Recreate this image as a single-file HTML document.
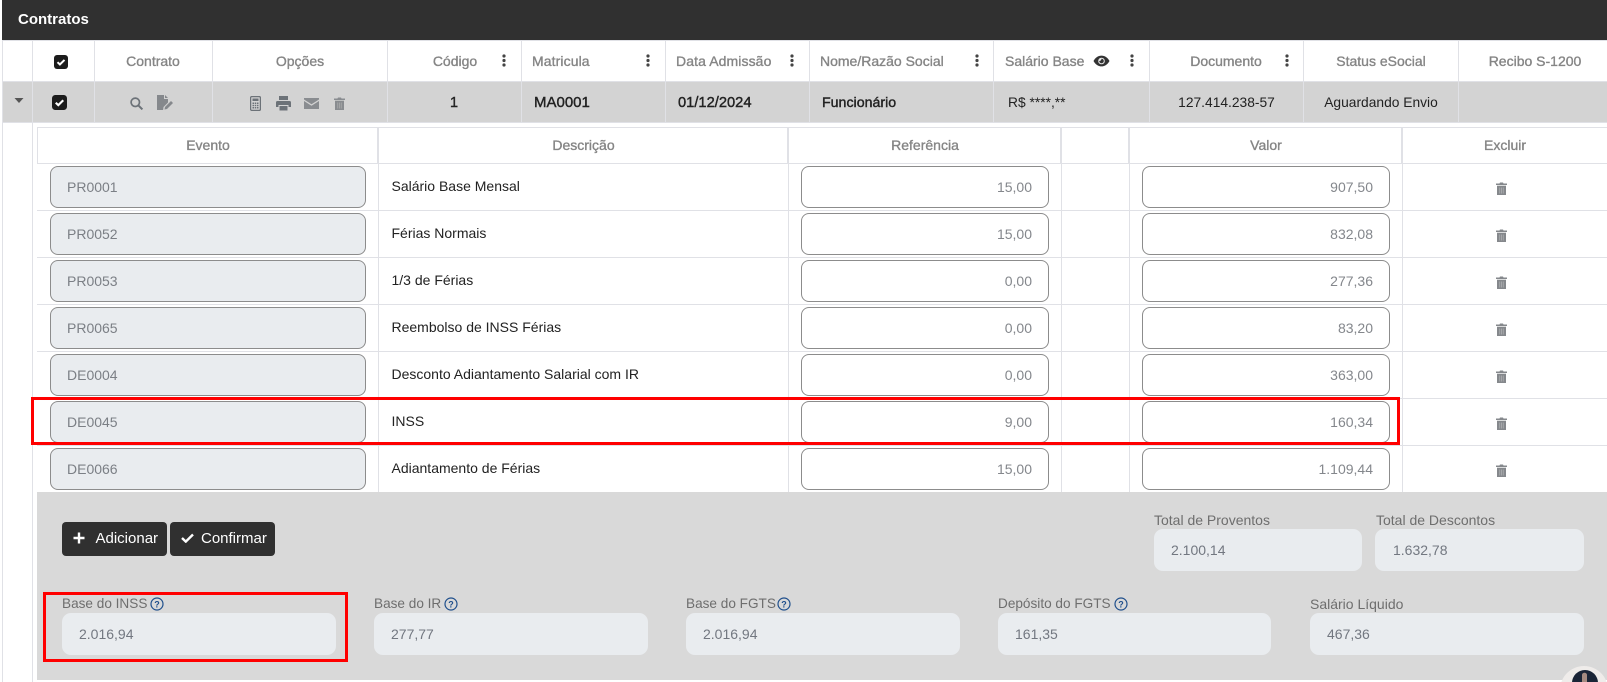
<!DOCTYPE html>
<html lang="pt-BR"><head><meta charset="utf-8"><title>Contratos</title>
<style>
*{box-sizing:border-box}
html,body{margin:0;padding:0;width:1607px;height:682px;overflow:hidden;background:#fff;font-family:"Liberation Sans",Arial,sans-serif}
.a{position:absolute}
.t{position:absolute;white-space:nowrap;line-height:20px;height:20px}
.c{transform:translateX(-50%)}
.h{font-size:14px;color:#858585;-webkit-text-stroke:.35px #858585;top:51px}
.h2{font-size:14px;color:#858585;-webkit-text-stroke:.35px #858585;top:135px}
.d{font-size:13.800px;color:#222;top:93px}
.m{-webkit-text-stroke:.4px #222}
.vl{position:absolute;width:1px;background:#e0e1e6}
.r{position:absolute;left:37px;width:1570px;height:47px;border-top:1px solid #e0e1e6;background:#fff}
.r .vl{top:0;height:47px}
.ev{position:absolute;left:13px;top:2px;width:316px;height:42px;border:1px solid #8c8c8c;border-radius:8px;background:#e9ecef;color:#7b7f85;font-size:14px;line-height:40px;padding-left:16px}
.in{position:absolute;top:2px;width:248px;height:42px;border:1px solid #8c8c8c;border-radius:8px;background:#fff;color:#84878c;font-size:14px;line-height:40px;text-align:right;padding-right:16px}
.ds{position:absolute;left:354.500px;top:12px;font-size:14px;line-height:20px;color:#222;white-space:nowrap}
.tr{position:absolute;left:1459px;top:18px}
.lb{position:absolute;font-size:14px;line-height:20px;color:#6e6e6e;white-space:nowrap}
.lb2{font-size:13.600px}
.f{position:absolute;height:42px;border-radius:9px;background:#e9ecef;color:#727780;font-size:14px;line-height:42px;padding-left:17px}
.f2{line-height:43px}
.btn{position:absolute;top:522px;height:34px;background:#303030;border-radius:4px}
.bt{position:absolute;top:529px;font-size:15px;line-height:20px;color:#fff;white-space:nowrap}
.rb{position:absolute;border:3px solid #f00;z-index:5;pointer-events:none}
svg{position:absolute;display:block}
</style></head><body>

<div class="a" style="left:2px;top:0;width:1605px;height:40px;background:#303030"></div>
<div class="t" style="left:18px;top:10px;font-size:15px;font-weight:bold;color:#fff">Contratos</div>

<div class="a" style="left:2px;top:82px;width:1605px;height:40px;background:#d3d3d3"></div>
<div class="a" style="left:2px;top:40px;width:1605px;height:1px;background:#e0e1e6"></div>
<div class="a" style="left:2px;top:81px;width:1605px;height:1px;background:#e0e1e6"></div>
<div class="a" style="left:2px;top:122px;width:1605px;height:1px;background:#e0e1e6"></div>

<div class="vl" style="left:2px;top:40px;height:642px"></div>
<div class="vl" style="left:32px;top:40px;height:642px"></div>
<div class="vl" style="left:94px;top:40px;height:83px"></div>
<div class="vl" style="left:212px;top:40px;height:83px"></div>
<div class="vl" style="left:387px;top:40px;height:83px"></div>
<div class="vl" style="left:521px;top:40px;height:83px"></div>
<div class="vl" style="left:665px;top:40px;height:83px"></div>
<div class="vl" style="left:809px;top:40px;height:83px"></div>
<div class="vl" style="left:993px;top:40px;height:83px"></div>
<div class="vl" style="left:1149px;top:40px;height:83px"></div>
<div class="vl" style="left:1303px;top:40px;height:83px"></div>
<div class="vl" style="left:1458px;top:40px;height:83px"></div>

<!-- header checkbox -->
<svg style="left:54px;top:55px" width="14" height="14" viewBox="0 0 14 14"><rect width="14" height="14" rx="3" fill="#1c1c1c"/><path d="M3.500 7.200l2.400 2.300 4.600-4.600" fill="none" stroke="#fff" stroke-width="2"/></svg>

<div class="t h c" style="left:153px">Contrato</div>
<div class="t h c" style="left:300px">Opções</div>
<div class="t h c" style="left:455px">Código</div>
<div class="t h" style="left:532px;letter-spacing:.1px">Matricula</div>
<div class="t h" style="left:676px;letter-spacing:.1px">Data Admissão</div>
<div class="t h" style="left:820px">Nome/Razão Social</div>
<div class="t h" style="left:1005px">Salário Base</div>
<div class="t h c" style="left:1226px">Documento</div>
<div class="t h c" style="left:1381px">Status eSocial</div>
<div class="t h c" style="left:1535px">Recibo S-1200</div>

<!-- kebabs -->
<svg style="left:502px;top:54px" width="4" height="13" viewBox="0 0 4 13" fill="#444"><circle cx="2" cy="2" r="1.600"/><circle cx="2" cy="6.500" r="1.600"/><circle cx="2" cy="11" r="1.600"/></svg>
<svg style="left:646px;top:54px" width="4" height="13" viewBox="0 0 4 13" fill="#444"><circle cx="2" cy="2" r="1.600"/><circle cx="2" cy="6.500" r="1.600"/><circle cx="2" cy="11" r="1.600"/></svg>
<svg style="left:790px;top:54px" width="4" height="13" viewBox="0 0 4 13" fill="#444"><circle cx="2" cy="2" r="1.600"/><circle cx="2" cy="6.500" r="1.600"/><circle cx="2" cy="11" r="1.600"/></svg>
<svg style="left:975px;top:54px" width="4" height="13" viewBox="0 0 4 13" fill="#444"><circle cx="2" cy="2" r="1.600"/><circle cx="2" cy="6.500" r="1.600"/><circle cx="2" cy="11" r="1.600"/></svg>
<svg style="left:1130px;top:54px" width="4" height="13" viewBox="0 0 4 13" fill="#444"><circle cx="2" cy="2" r="1.600"/><circle cx="2" cy="6.500" r="1.600"/><circle cx="2" cy="11" r="1.600"/></svg>
<svg style="left:1285px;top:54px" width="4" height="13" viewBox="0 0 4 13" fill="#444"><circle cx="2" cy="2" r="1.600"/><circle cx="2" cy="6.500" r="1.600"/><circle cx="2" cy="11" r="1.600"/></svg>

<!-- eye -->
<svg style="left:1093px;top:55px" width="17" height="12" viewBox="0 0 17 12"><path d="M.5 6C2.500 2.400 5.200.6 8.500.6s6 1.800 8 5.400c-2 3.600-4.700 5.400-8 5.400S2.500 9.600.5 6z" fill="#333"/><circle cx="8.500" cy="6" r="3.300" fill="#e8e8e8"/><path d="M8.500 3.700a2.300 2.300 0 1 1-2.300 2.300c1.300 0 2.300-1 2.300-2.300z" fill="#333"/></svg>

<!-- row -->
<svg style="left:14px;top:98px" width="10" height="6" viewBox="0 0 10 6"><path d="M.5 0h9L5 5z" fill="#555"/></svg>
<svg style="left:52px;top:95px" width="15" height="15" viewBox="0 0 14 14"><rect width="14" height="14" rx="3" fill="#1c1c1c"/><path d="M3.500 7.200l2.400 2.300 4.600-4.600" fill="none" stroke="#fff" stroke-width="2"/></svg>

<svg style="left:130px;top:97px" width="13" height="13" viewBox="0 0 13 13"><circle cx="5.300" cy="5.300" r="4.200" fill="none" stroke="#6c7278" stroke-width="1.700"/><path d="M8.400 8.400l4 4" stroke="#6c7278" stroke-width="2"/></svg>
<svg style="left:157px;top:95px" width="17" height="15" viewBox="0 0 17 15" fill="#85888c"><path d="M0 0h7v4h4v3.500L6.500 12l-.4 3H0zM8 0l3 3H8z"/><path d="M7.500 14.500l.5-2.500 6-6 2 2-6 6z"/></svg>

<svg style="left:250px;top:96px" width="11" height="15" viewBox="0 0 11 15"><rect x=".6" y=".6" width="9.800" height="13.800" rx="1.200" fill="none" stroke="#6c7278" stroke-width="1.300"/><rect x="2.500" y="2.500" width="6" height="2.500" fill="#6c7278"/><path d="M2.500 6.500h6v6h-6z" fill="#6c7278"/><path d="M4.500 6.500v6M6.500 6.500v6M2.500 8.500h6M2.500 10.500h6" stroke="#d3d3d3" stroke-width=".7"/></svg>
<svg style="left:276px;top:96px" width="15" height="15" viewBox="0 0 15 15" fill="#6c7278"><path d="M3 0h9v4H3z"/><path d="M1.500 5h12A1.500 1.500 0 0 1 15 6.500V11h-2.500V9h-10v2H0V6.500A1.500 1.500 0 0 1 1.500 5z"/><path d="M3.500 10h8v4.500h-8z"/></svg>
<svg style="left:303.500px;top:98px" width="15" height="11" viewBox="0 0 15 11" fill="#898c90"><path d="M0 0h15v1.500L7.500 6.300 0 1.500z"/><path d="M0 3l7.500 4.800L15 3v8H0z"/></svg>
<svg style="left:334px;top:97px" width="11" height="13" viewBox="0 0 11 13" fill="#898c90"><path d="M0 1.500h3.500L4 .5h3l.5 1H11V3H0z"/><path d="M1 3.700h9V13H1z"/><path d="M3.800 5.500v6M5.500 5.500v6M7.200 5.500v6" stroke="#b0b0b0" stroke-width=".7"/></svg>

<div class="t d m c" style="left:454px;font-size:14.500px">1</div>
<div class="t d m" style="left:534px;font-size:15px">MA0001</div>
<div class="t d m" style="left:678px;font-size:14.700px">01/12/2024</div>
<div class="t d m" style="left:822px;font-size:14.200px">Funcionário</div>
<div class="t d" style="left:1008px">R$ ****,**</div>
<div class="t d c" style="left:1226.500px">127.414.238-57</div>
<div class="t d c" style="left:1381px">Aguardando Envio</div>

<!-- inner table -->
<div class="vl" style="left:37px;top:127px;height:366px"></div>
<div class="a" style="left:37px;top:127px;width:1570px;height:1px;background:#e0e1e6"></div>
<div class="vl" style="left:377px;top:127px;height:37px;width:2px"></div>
<div class="vl" style="left:787px;top:127px;height:37px;width:2px"></div>
<div class="vl" style="left:1060px;top:127px;height:37px;width:2px"></div>
<div class="vl" style="left:1128px;top:127px;height:37px;width:2px"></div>
<div class="vl" style="left:1401px;top:127px;height:37px;width:2px"></div>
<div class="t h2 c" style="left:208px">Evento</div>
<div class="t h2 c" style="left:583.500px">Descrição</div>
<div class="t h2 c" style="left:925px">Referência</div>
<div class="t h2 c" style="left:1266px">Valor</div>
<div class="t h2 c" style="left:1505px">Excluir</div>

<div class="r" style="top:163px"><div class="vl" style="left:341px"></div><div class="vl" style="left:751px"></div><div class="vl" style="left:1024px"></div><div class="vl" style="left:1092px"></div><div class="vl" style="left:1365px"></div>
<div class="ev">PR0001</div><div class="ds">Salário Base Mensal</div><div class="in" style="left:764px">15,00</div><div class="in" style="left:1105px">907,50</div>
<svg class="tr" width="11" height="13" viewBox="0 0 11 13" fill="#85888c"><path d="M0 1.500h3.500L4 .5h3l.5 1H11V3H0z"/><path d="M1 3.700h9V13H1z"/><path d="M3.800 5.500v6M5.500 5.500v6M7.200 5.500v6" stroke="#b4b6b8" stroke-width=".7"/></svg></div>

<div class="r" style="top:210px"><div class="vl" style="left:341px"></div><div class="vl" style="left:751px"></div><div class="vl" style="left:1024px"></div><div class="vl" style="left:1092px"></div><div class="vl" style="left:1365px"></div>
<div class="ev">PR0052</div><div class="ds">Férias Normais</div><div class="in" style="left:764px">15,00</div><div class="in" style="left:1105px">832,08</div>
<svg class="tr" width="11" height="13" viewBox="0 0 11 13" fill="#85888c"><path d="M0 1.500h3.500L4 .5h3l.5 1H11V3H0z"/><path d="M1 3.700h9V13H1z"/><path d="M3.800 5.500v6M5.500 5.500v6M7.200 5.500v6" stroke="#b4b6b8" stroke-width=".7"/></svg></div>

<div class="r" style="top:257px"><div class="vl" style="left:341px"></div><div class="vl" style="left:751px"></div><div class="vl" style="left:1024px"></div><div class="vl" style="left:1092px"></div><div class="vl" style="left:1365px"></div>
<div class="ev">PR0053</div><div class="ds">1/3 de Férias</div><div class="in" style="left:764px">0,00</div><div class="in" style="left:1105px">277,36</div>
<svg class="tr" width="11" height="13" viewBox="0 0 11 13" fill="#85888c"><path d="M0 1.500h3.500L4 .5h3l.5 1H11V3H0z"/><path d="M1 3.700h9V13H1z"/><path d="M3.800 5.500v6M5.500 5.500v6M7.200 5.500v6" stroke="#b4b6b8" stroke-width=".7"/></svg></div>

<div class="r" style="top:304px"><div class="vl" style="left:341px"></div><div class="vl" style="left:751px"></div><div class="vl" style="left:1024px"></div><div class="vl" style="left:1092px"></div><div class="vl" style="left:1365px"></div>
<div class="ev">PR0065</div><div class="ds">Reembolso de INSS Férias</div><div class="in" style="left:764px">0,00</div><div class="in" style="left:1105px">83,20</div>
<svg class="tr" width="11" height="13" viewBox="0 0 11 13" fill="#85888c"><path d="M0 1.500h3.500L4 .5h3l.5 1H11V3H0z"/><path d="M1 3.700h9V13H1z"/><path d="M3.800 5.500v6M5.500 5.500v6M7.200 5.500v6" stroke="#b4b6b8" stroke-width=".7"/></svg></div>

<div class="r" style="top:351px"><div class="vl" style="left:341px"></div><div class="vl" style="left:751px"></div><div class="vl" style="left:1024px"></div><div class="vl" style="left:1092px"></div><div class="vl" style="left:1365px"></div>
<div class="ev">DE0004</div><div class="ds">Desconto Adiantamento Salarial com IR</div><div class="in" style="left:764px">0,00</div><div class="in" style="left:1105px">363,00</div>
<svg class="tr" width="11" height="13" viewBox="0 0 11 13" fill="#85888c"><path d="M0 1.500h3.500L4 .5h3l.5 1H11V3H0z"/><path d="M1 3.700h9V13H1z"/><path d="M3.800 5.500v6M5.500 5.500v6M7.200 5.500v6" stroke="#b4b6b8" stroke-width=".7"/></svg></div>

<div class="r" style="top:398px"><div class="vl" style="left:341px"></div><div class="vl" style="left:751px"></div><div class="vl" style="left:1024px"></div><div class="vl" style="left:1092px"></div><div class="vl" style="left:1365px"></div>
<div class="ev">DE0045</div><div class="ds">INSS</div><div class="in" style="left:764px">9,00</div><div class="in" style="left:1105px">160,34</div>
<svg class="tr" width="11" height="13" viewBox="0 0 11 13" fill="#85888c"><path d="M0 1.500h3.500L4 .5h3l.5 1H11V3H0z"/><path d="M1 3.700h9V13H1z"/><path d="M3.800 5.500v6M5.500 5.500v6M7.200 5.500v6" stroke="#b4b6b8" stroke-width=".7"/></svg></div>

<div class="r" style="top:445px"><div class="vl" style="left:341px"></div><div class="vl" style="left:751px"></div><div class="vl" style="left:1024px"></div><div class="vl" style="left:1092px"></div><div class="vl" style="left:1365px"></div>
<div class="ev">DE0066</div><div class="ds">Adiantamento de Férias</div><div class="in" style="left:764px">15,00</div><div class="in" style="left:1105px">1.109,44</div>
<svg class="tr" width="11" height="13" viewBox="0 0 11 13" fill="#85888c"><path d="M0 1.500h3.500L4 .5h3l.5 1H11V3H0z"/><path d="M1 3.700h9V13H1z"/><path d="M3.800 5.500v6M5.500 5.500v6M7.200 5.500v6" stroke="#b4b6b8" stroke-width=".7"/></svg></div>

<!-- panel -->
<div class="a" style="left:37px;top:492px;width:1570px;height:188px;background:#d9d9d9"></div>

<div class="btn" style="left:62px;width:105px"></div>
<div class="btn" style="left:170px;width:105px"></div>
<svg style="left:73px;top:532px" width="12" height="12" viewBox="0 0 12 12"><path d="M6 .5v11M.5 6h11" stroke="#fff" stroke-width="2.400"/></svg>
<svg style="left:181px;top:533px" width="13" height="10" viewBox="0 0 13 10"><path d="M1 5l3.800 3.600L12 1.500" fill="none" stroke="#fff" stroke-width="2.400"/></svg>
<div class="bt" style="left:95.500px">Adicionar</div>
<div class="bt" style="left:201px">Confirmar</div>

<div class="lb" style="left:1154px;top:510px">Total de Proventos</div>
<div class="f" style="left:1154px;top:529px;width:208px">2.100,14</div>
<div class="lb" style="left:1376px;top:510px">Total de Descontos</div>
<div class="f" style="left:1375px;top:529px;width:209px;padding-left:18px">1.632,78</div>

<div class="lb lb2" style="left:62px;top:594px">Base do INSS</div>
<div class="f f2" style="left:62px;top:613px;width:274px">2.016,94</div>
<div class="lb lb2" style="left:374px;top:594px">Base do IR</div>
<div class="f f2" style="left:374px;top:613px;width:274px">277,77</div>
<div class="lb lb2" style="left:686px;top:594px">Base do FGTS</div>
<div class="f f2" style="left:686px;top:613px;width:274px">2.016,94</div>
<div class="lb lb2" style="left:998px;top:594px">Depósito do FGTS</div>
<div class="f f2" style="left:998px;top:613px;width:273px">161,35</div>
<div class="lb" style="left:1310px;top:594px">Salário Líquido</div>
<div class="f f2" style="left:1310px;top:613px;width:274px">467,36</div>

<svg style="left:150px;top:597px" width="14" height="14" viewBox="0 0 14 14"><circle cx="7" cy="7" r="6" fill="none" stroke="#1f4f8c" stroke-width="1.200"/><text x="7" y="10.300" text-anchor="middle" font-size="9" font-weight="bold" font-family="Liberation Sans" fill="#1f4f8c">?</text></svg>
<svg style="left:444px;top:597px" width="14" height="14" viewBox="0 0 14 14"><circle cx="7" cy="7" r="6" fill="none" stroke="#1f4f8c" stroke-width="1.200"/><text x="7" y="10.300" text-anchor="middle" font-size="9" font-weight="bold" font-family="Liberation Sans" fill="#1f4f8c">?</text></svg>
<svg style="left:777px;top:597px" width="14" height="14" viewBox="0 0 14 14"><circle cx="7" cy="7" r="6" fill="none" stroke="#1f4f8c" stroke-width="1.200"/><text x="7" y="10.300" text-anchor="middle" font-size="9" font-weight="bold" font-family="Liberation Sans" fill="#1f4f8c">?</text></svg>
<svg style="left:1114px;top:597px" width="14" height="14" viewBox="0 0 14 14"><circle cx="7" cy="7" r="6" fill="none" stroke="#1f4f8c" stroke-width="1.200"/><text x="7" y="10.300" text-anchor="middle" font-size="9" font-weight="bold" font-family="Liberation Sans" fill="#1f4f8c">?</text></svg>

<!-- avatar -->
<svg style="left:1555px;top:660px" width="52" height="22" viewBox="0 0 52 22"><circle cx="29" cy="30" r="24" fill="#efecea"/><circle cx="30" cy="23" r="13" fill="#1a2436"/><path d="M27 22v-7c0-3 5-3 5 0v7z" fill="#a58a80"/></svg>

<!-- red boxes -->
<div class="rb" style="left:31px;top:397px;width:1369px;height:48px"></div>
<div class="rb" style="left:43px;top:592px;width:305px;height:70px"></div>

</body></html>
